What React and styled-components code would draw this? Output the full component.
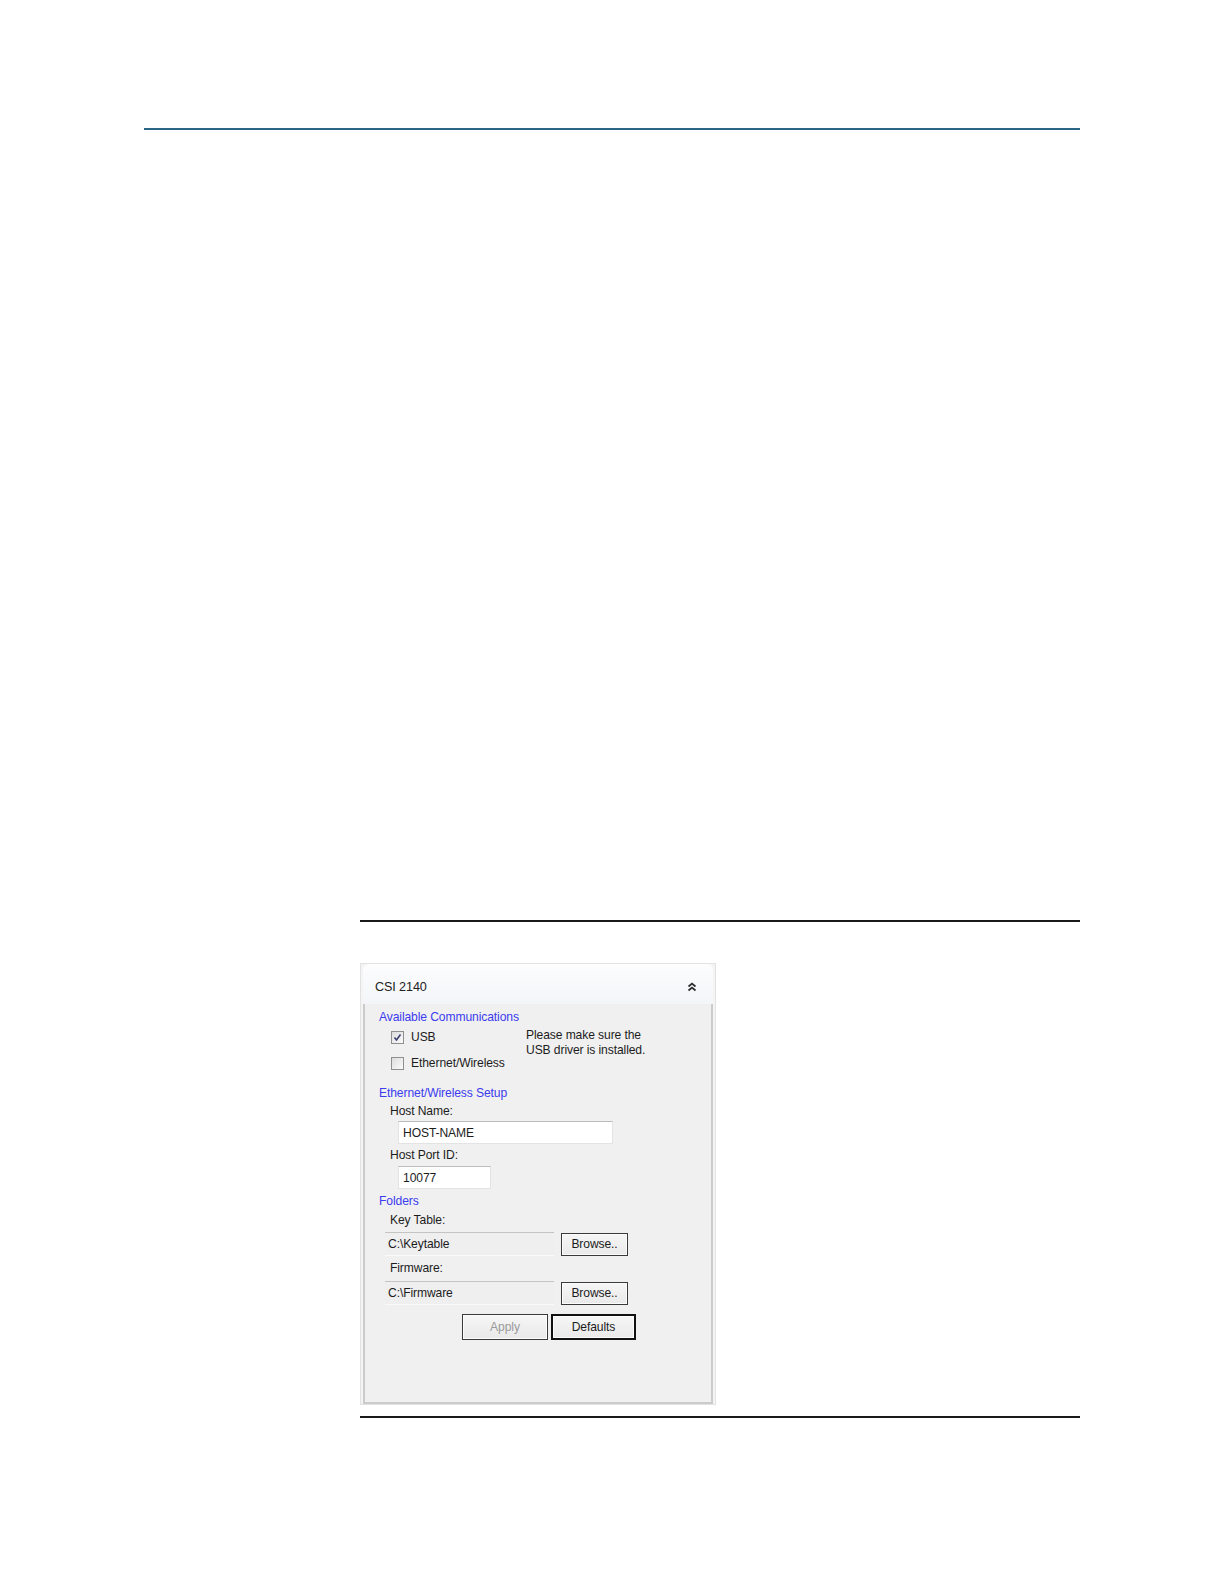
import React from "react";
import styled, { createGlobalStyle } from "styled-components";

const Global = createGlobalStyle`
  html, body {
    margin: 0;
    padding: 0;
    background: #ffffff;
  }
  body {
    font-family: "Liberation Sans", Arial, sans-serif;
    color: #1c1c1c;
  }
`;

const Page = styled.div`
  padding: 128px 0 120px;
`;

const TopRule = styled.div`
  margin-left: 144px;
  width: 936px;
  height: 2px;
  background: #2c6686;
`;

const Figure = styled.div`
  margin: 790px 0 0 360px;
  width: 720px;
  border-top: 2px solid #1a1a1a;
  border-bottom: 2px solid #1a1a1a;
  padding: 41px 0 11px;
`;

const Panel = styled.div`
  width: 356px;
  height: 442px;
  box-sizing: border-box;
  border: 1px solid #e2e2e2;
  padding: 0 2px;
  background: #f4f4f4;
  display: flex;
  flex-direction: column;
  font-size: 12.1px;
  letter-spacing: -0.1px;
`;

const Header = styled.div`
  height: 40px;
  box-sizing: border-box;
  flex: none;
  display: flex;
  align-items: center;
  justify-content: space-between;
  padding: 6px 16px 0 12px;
  background: linear-gradient(#fdfdfe, #f3f5f8);
  border-radius: 6px 6px 0 0;
  font-size: 12.6px;
  color: #222;
`;

const Body = styled.div`
  flex: 1;
  background: #f0f0f0;
  border: 2px solid #cbcbcb;
  border-top: none;
  padding: 5px 0 0 14px;
  display: flex;
  flex-direction: column;
  align-items: flex-start;
`;

const Section = styled.div`
  color: #3b3bef;
  line-height: 16px;
  margin-top: ${(p) => p.$mt || 0}px;
`;

const Label = styled.div`
  line-height: 16px;
  margin: ${(p) => p.$mt || 0}px 0 0 11px;
`;

const CommRow = styled.div`
  display: flex;
  margin-top: -1px;
`;

const CheckList = styled.div`
  width: 147px;
  display: flex;
  flex-direction: column;
`;

const CheckRow = styled.div`
  height: 26px;
  display: flex;
  align-items: center;
  gap: 7px;
  padding-left: 12px;
`;

const Box = styled.span`
  width: 13px;
  height: 13px;
  box-sizing: border-box;
  border: 1px solid #8e8f8f;
  background: linear-gradient(135deg, #dcdcdc, #fbfbfb);
  display: flex;
  align-items: center;
  justify-content: center;
`;

const Note = styled.div`
  line-height: 15px;
  margin-top: 4px;
`;

const Input = styled.div`
  width: ${(p) => p.$w}px;
  height: 23px;
  box-sizing: border-box;
  margin: ${(p) => p.$mt || 0}px 0 0 19px;
  background: #ffffff;
  border: 1px solid #e3e3e3;
  border-top-color: #bcbcbc;
  display: flex;
  align-items: center;
  padding-left: 4px;
`;

const FieldRow = styled.div`
  display: flex;
  align-items: center;
  gap: 7px;
  margin: ${(p) => p.$mt || 0}px 0 0 6px;
`;

const ReadOnly = styled.div`
  width: 169px;
  height: 24px;
  box-sizing: border-box;
  border-top: 1px solid #c4c4c4;
  border-bottom: 1px solid #fafafa;
  background: #efefef;
  display: flex;
  align-items: center;
  padding-left: 3px;
`;

const Button = styled.div`
  width: ${(p) => p.$w}px;
  height: ${(p) => p.$h}px;
  box-sizing: border-box;
  border: ${(p) => (p.$default ? "2px solid #111" : "1px solid #3a3a3a")};
  box-shadow: inset 0 0 0 1px #fcfcfc;
  background: linear-gradient(#f6f6f6, #e9e9e9);
  color: ${(p) => (p.$disabled ? "#9a9a9a" : "#1c1c1c")};
  display: flex;
  align-items: center;
  justify-content: center;
`;

const ActionRow = styled.div`
  display: flex;
  gap: 3px;
  margin: 9px 0 0 83px;
`;

const Chevron = () => (
  <svg width="10" height="10" viewBox="0 0 10 10">
    <polyline points="1.5,4.5 5,1.5 8.5,4.5" fill="none" stroke="#2a2a2a" strokeWidth="1.7" />
    <polyline points="1.5,8.5 5,5.5 8.5,8.5" fill="none" stroke="#2a2a2a" strokeWidth="1.7" />
  </svg>
);

const Tick = () => (
  <svg width="9" height="9" viewBox="0 0 9 9">
    <polyline points="1.5,4.5 3.5,7 7.5,1.5" fill="none" stroke="#3b3f6e" strokeWidth="1.6" />
  </svg>
);

export default function App() {
  return (
    <Page>
      <Global />
      <TopRule />
      <Figure>
        <Panel>
          <Header>
            <span>CSI 2140</span>
            <Chevron />
          </Header>
          <Body>
            <Section>Available Communications</Section>
            <CommRow>
              <CheckList>
                <CheckRow>
                  <Box>
                    <Tick />
                  </Box>
                  USB
                </CheckRow>
                <CheckRow>
                  <Box />
                  Ethernet/Wireless
                </CheckRow>
              </CheckList>
              <Note>
                Please make sure the
                <br />
                USB driver is installed.
              </Note>
            </CommRow>
            <Section $mt={9}>Ethernet/Wireless Setup</Section>
            <Label $mt={2}>Host Name:</Label>
            <Input $w={215} $mt={2}>HOST-NAME</Input>
            <Label $mt={3}>Host Port ID:</Label>
            <Input $w={93} $mt={3}>10077</Input>
            <Section $mt={4}>Folders</Section>
            <Label $mt={3}>Key Table:</Label>
            <FieldRow $mt={4}>
              <ReadOnly>C:\Keytable</ReadOnly>
              <Button $w={67} $h={23}>Browse..</Button>
            </FieldRow>
            <Label $mt={4}>Firmware:</Label>
            <FieldRow $mt={5}>
              <ReadOnly>C:\Firmware</ReadOnly>
              <Button $w={67} $h={23}>Browse..</Button>
            </FieldRow>
            <ActionRow>
              <Button $w={86} $h={26} $disabled>Apply</Button>
              <Button $w={85} $h={26} $default>Defaults</Button>
            </ActionRow>
          </Body>
        </Panel>
      </Figure>
    </Page>
  );
}
